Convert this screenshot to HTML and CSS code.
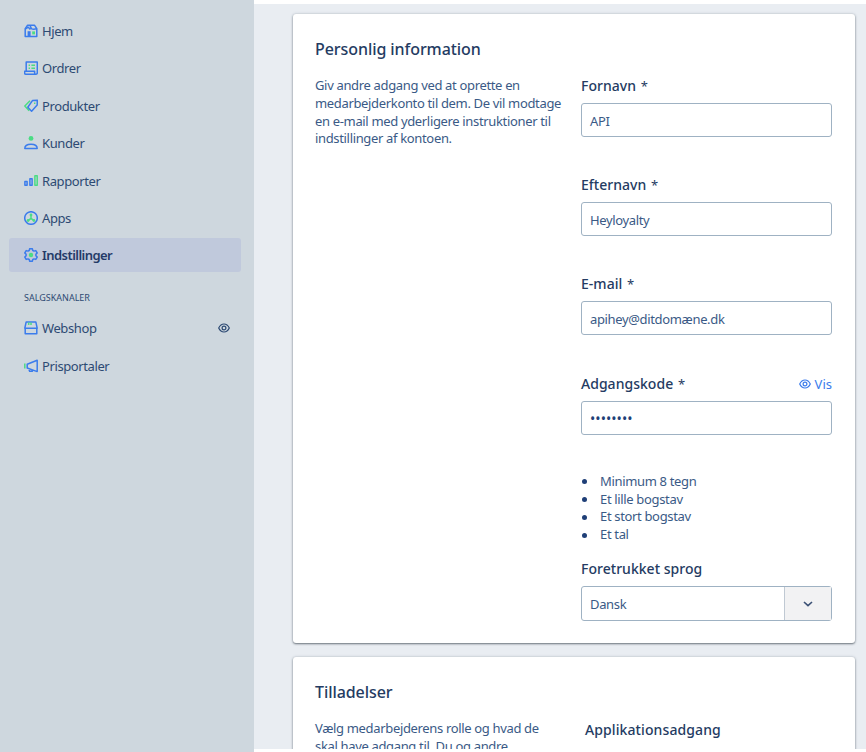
FILE: index.html
```html
<!DOCTYPE html>
<html lang="da">
<head>
    <meta charset="UTF-8">
    <meta name="viewport" content="width=device-width, initial-scale=1.0">
    <title>Indstillinger</title>
    <link rel="stylesheet" href="styles.css">
</head>
<body>
<div class="page">
    <nav class="sidebar">
        <a class="nav-item">
            <svg class="icon" viewBox="0 0 14 14">
                <path class="blue" d="M1.2 4.6V12.6H12.8V4.6L10.6 1.3H3.6Z"/>
                <path class="blue" d="M1.2 5.2L4.3 3.2L6.4 5.4M6 1.5L7.4 4.6Q9 5.8 12.8 4.8"/>
                <path class="blue-fill" d="M3.6 7.2H6.6V12.6H3.6Z"/>
                <path class="green-fill" d="M8.2 7.4H11V10.4H8.2Z"/>
            </svg>
            <span>Hjem</span>
        </a>
        <a class="nav-item">
            <svg class="icon" viewBox="0 0 14 14">
                <path class="blue" d="M2.2 10V1H13.3V12Q13.3 13.2 12 13.2H1.8Q.6 13.2 .6 12V10.3H10.6V12Q10.8 13.2 12 13.2"/>
                <path class="green" d="M4.6 4.2H6M7.4 4.2H11M4.6 7.2H6M7.4 7.2H11"/>
            </svg>
            <span>Ordrer</span>
        </a>
        <a class="nav-item">
            <svg class="icon" viewBox="0 0 14 14">
                <path class="green" d="M6 1.8L.8 7L5.2 11.8"/>
                <path class="blue" d="M8.6 1.4L13.3 1.2L13.2 6L7.6 12.2L3.8 8.2Z"/>
                <path class="green-fill" d="M10 3.6H11.4V5H10Z"/>
            </svg>
            <span>Produkter</span>
        </a>
        <a class="nav-item">
            <svg class="icon" viewBox="0 0 14 14">
                <circle class="green-fill" cx="7" cy="2.4" r="2.4"/>
                <path class="blue" d="M.8 12.6Q.8 8.3 7 8.3T13.2 12.6Z"/>
            </svg>
            <span>Kunder</span>
        </a>
        <a class="nav-item">
            <svg class="icon" viewBox="0 0 14 14">
                <path class="blue" d="M.9 7.6H3.1V11.2H.9ZM5.9 4.8H8.1V11.2H5.9Z"/>
                <path class="green" d="M10.9 1.8H13.2V11.2H10.9Z"/>
            </svg>
            <span>Rapporter</span>
        </a>
        <a class="nav-item">
            <svg class="icon" viewBox="0 0 14 14">
                <circle class="blue" cx="7" cy="7" r="6.3"/>
                <path class="green" d="M7 4V7.4L4.3 9.4M7 7.4L9.7 9.4"/>
                <circle class="green-fill" cx="7" cy="3.9" r="1.4"/>
                <circle class="green-fill" cx="4.1" cy="9.5" r="1.4"/>
                <circle class="green-fill" cx="9.9" cy="9.5" r="1.4"/>
            </svg>
            <span>Apps</span>
        </a>
        <a class="nav-item active">
            <svg class="icon" viewBox="0 0 14 14">
                <path class="blue" d="M5.7 .7H8.3L8.8 2.5L10 3.1L11.8 2.6L13.2 4.9L11.9 6.2V7.8L13.2 9.1L11.8 11.4L10 10.9L8.8 11.5L8.3 13.3H5.7L5.2 11.5L4 10.9L2.2 11.4L.8 9.1L2.1 7.8V6.2L.8 4.9L2.2 2.6L4 3.1L5.2 2.5Z"/>
                <circle class="green-fill" cx="7" cy="7" r="2.2"/>
            </svg>
            <span>Indstillinger</span>
        </a>
        <div class="nav-title">SALGSKANALER</div>
        <a class="nav-item">
            <svg class="icon" viewBox="0 0 14 14">
                <path class="blue" d="M2.2 .9H11.8L13.2 7.2H.8ZM1.2 7.2V12.8H12.8V7.2"/>
                <path class="green" d="M4.7 1.6V4M7 1.6V4"/>
            </svg>
            <span>Webshop</span>
            <svg class="eye" viewBox="0 0 12 10">
                <path d="M.7 5Q2.6 1 6 1T11.3 5Q9.4 9 6 9T.7 5Z"/>
                <circle cx="6" cy="5" r="1.9"/>
            </svg>
        </a>
        <a class="nav-item">
            <svg class="icon" viewBox="0 0 14 14">
                <path class="green" d="M.8 4.6V9.4"/>
                <path class="blue" d="M3.2 5.2L13.2 1.2V12.6L3.2 9ZM4.6 9.4L5.6 12.2H8.4V11"/>
            </svg>
            <span>Prisportaler</span>
        </a>
    </nav>
    <main class="content">
        <section class="card">
            <h2>Personlig information</h2>
            <div class="columns">
                <p class="description">Giv andre adgang ved at oprette en<br>medarbejderkonto til dem. De vil modtage<br>en e-mail med yderligere instruktioner til<br>indstillinger af kontoen.</p>
                <form class="fields">
                    <div class="field">
                        <label>Fornavn <span>*</span></label>
                        <div class="input">API</div>
                    </div>
                    <div class="field">
                        <label>Efternavn <span>*</span></label>
                        <div class="input">Heyloyalty</div>
                    </div>
                    <div class="field">
                        <label>E-mail <span>*</span></label>
                        <div class="input">apihey@ditdomæne.dk</div>
                    </div>
                    <div class="field">
                        <div class="label-row">
                            <label>Adgangskode <span>*</span></label>
                            <a class="show">
                                <svg class="eye" viewBox="0 0 12 10">
                                    <path d="M.7 5Q2.6 1 6 1T11.3 5Q9.4 9 6 9T.7 5Z"/>
                                    <circle cx="6" cy="5" r="1.9"/>
                                </svg>
                                <span>Vis</span>
                            </a>
                        </div>
                        <div class="input password">••••••••</div>
                    </div>
                    <ul class="rules">
                        <li>Minimum 8 tegn</li>
                        <li>Et lille bogstav</li>
                        <li>Et stort bogstav</li>
                        <li>Et tal</li>
                    </ul>
                    <div class="field language">
                        <label>Foretrukket sprog</label>
                        <div class="select">
                            <span>Dansk</span>
                            <div class="arrow">
                                <svg viewBox="0 0 10 6"><path d="M1 1L5 4.7L9 1"/></svg>
                            </div>
                        </div>
                    </div>
                </form>
            </div>
        </section>
        <section class="card second">
            <h2>Tilladelser</h2>
            <div class="columns">
                <p class="description">Vælg medarbejderens rolle og hvad de<br>skal have adgang til. Du og andre</p>
                <h3>Applikationsadgang</h3>
            </div>
        </section>
    </main>
</div>
</body>
</html>
```
FILE: styles.css
```css
*{
    box-sizing: border-box;
}
body{
    margin: 0;
    background: #fff;
    color: #3a5a86;
    font-family: "Noto Sans", sans-serif;
    font-size: 13px;
}
.page{
    display: flex;
    height: 752px;
    overflow: hidden;
}
.sidebar{
    width: 254px;
    padding: 14px 13px 0 9px;
    background: #ced7de;
    color: #2d4a73;
}
.nav-item{
    display: flex;
    align-items: center;
    gap: 4px;
    height: 34px;
    margin-bottom: 3.4px;
    padding: 0 11px 0 15px;
    border-radius: 3px;
    letter-spacing: -0.4px;
}
.active{
    background: #c0c9dc;
    color: #243b68;
    font-weight: 600;
    letter-spacing: -0.55px;
}
.nav-title{
    height: 20px;
    margin: 16px 0 3px 15px;
    font-size: 9px;
    line-height: 20px;
}
.icon{
    width: 14px;
    height: 14px;
}
.blue, .green{
    fill: none;
    stroke: #3b7cec;
    stroke-width: 1.5;
    stroke-linejoin: round;
}
.green{
    stroke: #4bdc84;
}
.blue-fill{
    fill: #3b7cec;
}
.green-fill{
    fill: #4bdc84;
}
.eye{
    width: 12px;
    height: 10px;
    margin-left: auto;
    fill: none;
    stroke: currentColor;
    stroke-width: 1.2;
}
.content{
    flex: 1;
    height: 745px;
    margin-top: 4px;
    padding: 10px 11px 0 39px;
    background: #e9edf2;
    overflow: hidden;
}
.card{
    height: 629px;
    padding: 22px 23px 0 22px;
    border-radius: 3px;
    background: #fff;
    box-shadow: 0 1px 2px rgba(40, 50, 60, 0.6), 0 0 3px rgba(60, 80, 100, 0.25);
}
.second{
    margin-top: 14px;
}
h2, h3{
    margin: 0;
    color: #243b62;
    font-weight: 500;
}
h2{
    font-size: 16px;
    line-height: 26px;
    letter-spacing: -0.07px;
}
.columns{
    display: flex;
    justify-content: space-between;
    margin-top: 14px;
}
.description{
    margin: 0;
    padding-top: 1px;
    line-height: 17.8px;
    letter-spacing: -0.34px;
    white-space: nowrap;
}
.fields{
    width: 251px;
}
.field{
    height: 99.2px;
}
label{
    display: block;
    height: 27px;
    color: #243b62;
    font-size: 14px;
    font-weight: 500;
    line-height: 20px;
    letter-spacing: 0.03px;
}
label span{
    margin-left: 1px;
    font-size: 13px;
    font-weight: 400;
}
.label-row{
    display: flex;
    justify-content: space-between;
}
.show{
    display: flex;
    align-items: center;
    gap: 4px;
    height: 20px;
    color: #3b7cec;
}
.input, .select{
    height: 34px;
    padding-left: 8px;
    border: 1px solid #9fb2c3;
    border-radius: 3px;
    line-height: 34px;
    letter-spacing: -0.35px;
}
.password{
    color: #1f3f77;
    font-size: 14px;
    letter-spacing: 0.05px;
}
/* bullets sit closer to the edge than the default markers */
.rules{
    margin: 0;
    padding: 0;
    line-height: 17.8px;
    letter-spacing: -0.34px;
    list-style: none;
}
.rules li{
    display: flex;
    align-items: center;
    gap: 13px;
}
.rules li::before{
    content: "";
    width: 5px;
    height: 5px;
    margin-left: 1px;
    border-radius: 50%;
    background: #1f3f77;
}
.language{
    margin-top: 15px;
}
.select{
    display: flex;
    justify-content: space-between;
    height: 35px;
}
.arrow{
    display: flex;
    align-items: center;
    justify-content: center;
    width: 47px;
    border-left: 1px solid #c0c9d3;
    background: #f2f2f3;
}
.arrow svg{
    width: 10px;
    height: 6px;
    margin-top: 2px;
    fill: none;
    stroke: #3c5175;
    stroke-width: 1.6;
}
h3{
    width: 247px;
    padding-top: 1px;
    font-size: 14px;
    line-height: 20px;
    letter-spacing: 0.1px;
}
```
